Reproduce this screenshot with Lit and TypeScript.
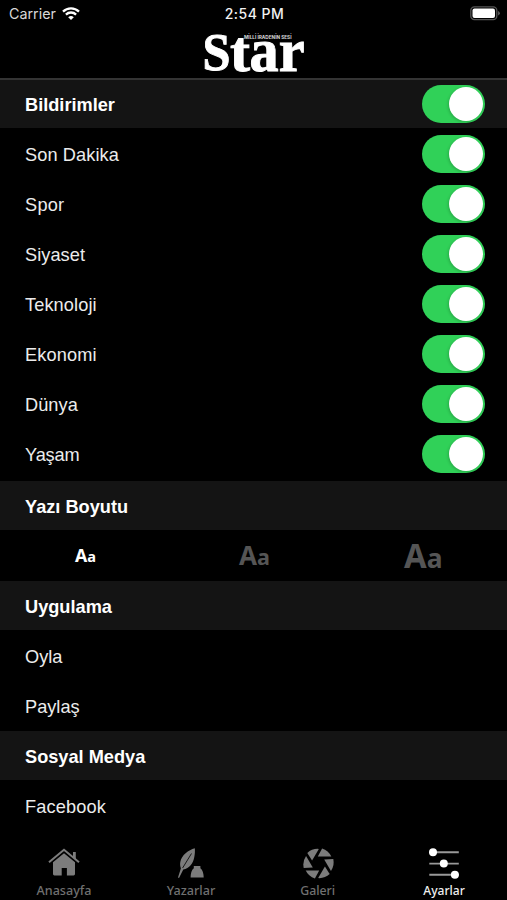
import { LitElement, html, svg, css } from "lit";
import { customElement, property } from "lit/decorators.js";
import { classMap } from "lit/directives/class-map.js";

@customElement("toggle-switch")
class ToggleSwitch extends LitElement {
  static styles = css`
    :host { display: block; flex: none; }
    .track {
      box-sizing: border-box; width: 63px; height: 38px; padding: 2px;
      border-radius: 19px; background: #30d158;
      display: flex; justify-content: flex-end;
    }
    .knob { width: 34px; height: 34px; border-radius: 50%; background: #fff; box-shadow: -1px 1px 3px rgba(0, 0, 0, 0.18); }
  `;
  render() {
    return html`<div class="track"><div class="knob"></div></div>`;
  }
}

@customElement("setting-row")
class SettingRow extends LitElement {
  @property() label = "";
  @property({ type: Boolean }) heading = false;
  @property({ type: Boolean }) toggle = false;
  @property({ type: Number }) fit = 0;
  static styles = css`
    :host { display: block; }
    .row {
      box-sizing: border-box; height: 50.5px; padding: 0 22px 0 25px;
      display: flex; align-items: center; justify-content: space-between;
      background: #000; color: #ececec;
      font: 400 18.2px/22px "Liberation Sans", Arial, sans-serif;
    }
    .row.toggle { height: 50px; }
    .heading { height: 49px; background: #141414; color: #fff; font-weight: 700; }
    .heading.toggle { height: 48px; }
    .label { white-space: nowrap; padding-top: 3px; }
    .toggle .label { padding-top: 2px; }
  `;
  render() {
    return html`<div class=${classMap({ row: true, heading: this.heading, toggle: this.toggle })}>
      <span class="label" style="letter-spacing:${this.fit}px">${this.label}</span>
      ${this.toggle ? html`<toggle-switch></toggle-switch>` : ""}
    </div>`;
  }
}

const homeIcon = svg`
  <path d="M1 14.2 16 1.8 31 14.2" fill="none" stroke="currentColor" stroke-width="2"/>
  <path d="M25 4h2.8v7.6L25 9.2z"/>
  <path d="M16 5.2 27 14.3V26a1.4 1.4 0 0 1-1.4 1.4H18.9V20h-5.2v7.4H6.4A1.4 1.4 0 0 1 5 26V14.3z"/>`;

const quillIcon = svg`
  <path d="M19.8.2C13.5 2 6.5 7 5.3 14c-.4 2.3-.2 4.4.6 6.2L3 29.6l1 .4 4.3-8.6c6-.6 10-6.4 11-12.4.6-3.3.8-6.2.5-8.8z"/>
  <path d="M16.500 5.500 7.600 20" stroke="#000" stroke-width=".8" fill="none"/>
  <path d="M18.800 18h6.600v2.200c2.200 1.600 3.300 5.600 3.300 9.300H15.600c0-3.700 1-7.700 3.200-9.300z"/>`;

const apertureIcon = svg`${[0, 60, 120, 180, 240, 300].map(
  (a) => svg`<path transform="translate(15.5 15.5) rotate(${a})" d="M3.600-15-.7-7H12.800A15.500 15.500 0 0 0 3.600-15z"/>`
)}`;

const slidersIcon = svg`
  <path d="M1.300 4.200h29.500M1.300 15.600h29.500M1.300 26.800h29.500" stroke="#999" stroke-width="1.900"/>
  <circle cx="5" cy="4.200" r="4"/><circle cx="15.800" cy="15.600" r="4"/><circle cx="26.900" cy="26.800" r="4"/>`;

const tabs = [
  { label: "Anasayfa", width: 55, icon: homeIcon, active: false, shift: 0 },
  { label: "Yazarlar", width: 48.5, icon: quillIcon, active: false, shift: 0 },
  { label: "Galeri", width: 35, icon: apertureIcon, active: false, shift: -1.3 },
  { label: "Ayarlar", width: 41.5, icon: slidersIcon, active: true, shift: 0 },
];

const sizes = [
  { big: 18, small: 14.8, x: 75, width: 21, baseline: 32.3, active: true },
  { big: 26.6, small: 22, x: 70, width: 31, baseline: 35, active: false },
  { big: 34, small: 27.5, x: 66, width: 38.5, baseline: 37.7, active: false },
];

const topics: [string, number][] = [
  ["Son Dakika", 0.1], ["Spor", 0.25], ["Siyaset", 0.05], ["Teknoloji", 0.1],
  ["Ekonomi", 0.15], ["Dünya", 0.05], ["Yaşam", -0.15],
];

@customElement("app-root")
class AppRoot extends LitElement {
  static styles = css`
    :host {
      display: flex; flex-direction: column; width: 507px; height: 900px;
      overflow: hidden; background: #000; color: #fff;
    }
    svg { display: block; }
    .status {
      height: 28px; flex: none; display: grid; grid-template-columns: 1fr auto 1fr;
      align-items: center; padding: 0 7px 0 9px;
      font: 400 14.3px/18px Inter, sans-serif;
    }
    .carrier { display: flex; align-items: center; gap: 6px; color: #d8d8d8; }
    .time { font-weight: 500; font-size: 14px; color: #f2f2f2; letter-spacing: 0.5px; }
    .battery { justify-self: end; }
    .brand {
      box-sizing: border-box; height: 52px; flex: none; display: flex; justify-content: center;
      border-bottom: 2px solid #343434;
    }
    .logo { font-family: "Liberation Serif", serif; font-weight: 700; fill: #fff; stroke: #fff; stroke-width: 0.9px; overflow: visible; }
    .motto { font: 700 4.8px Inter, sans-serif; fill: #d8d8d8; stroke: none; }
    .list { flex: 1; min-height: 0; overflow: hidden; }
    .topics { display: block; height: 353px; padding-top: 1px; box-sizing: border-box; }
    .sizes { display: flex; height: 51px; }
    .size { fill: #555; font: 700 18px "Noto Sans", sans-serif; width: 169px; }
    .size.active { fill: #fff; }
    .tabs { height: 60px; flex: none; display: flex; background: #000; }
    .tab {
      flex: 1; display: flex; flex-direction: column; align-items: center;
      padding-top: 8px; color: #7c7c7c; fill: currentColor;
    }
    .tab:not(.active) { padding-left: 1.5px; }
    .tab.active { color: #fff; }
    .name { font: 500 12px "Noto Sans", sans-serif; fill: #707070; }
    .active .name { fill: #eee; }
  `;

  render() {
    return html`
      <div class="status">
        <div class="carrier">
          <span>Carrier</span>
          <svg width="18" height="14" viewBox="0 0 18 14" fill="none" stroke="#fff" stroke-width="2.3">
            <path d="M1 4.600a11.500 11.500 0 0 1 16 0M3.900 7.600a7.300 7.300 0 0 1 10.200 0"/>
            <path d="M9 13.100 6.200 10.300a4 4 0 0 1 5.600 0z" fill="#fff" stroke="none"/>
          </svg>
        </div>
        <span class="time">2:54 PM</span>
        <svg class="battery" width="30" height="16" viewBox="0 0 30 16">
          <rect x=".8" y=".8" width="26" height="12.800" rx="3.600" fill="none" stroke="#555" stroke-width="1.300"/>
          <rect x="2.500" y="2.500" width="22.500" height="9.400" rx="2" fill="#fff"/>
          <path d="M28.200 5v4.500q1.600-.7 1.600-2.250T28.200 5z" fill="#666"/>
        </svg>
      </div>
      <div class="brand">
        <svg width="104" height="48" viewBox="202 28 104 48" class="logo">
          <text x="202.500" y="70.200" font-size="53" textLength="28" lengthAdjust="spacingAndGlyphs">S</text>
          <text x="230" y="70.500" font-size="56" textLength="20" lengthAdjust="spacingAndGlyphs">t</text>
          <text transform="translate(249.500 70.500) scale(1 1.080)" font-size="57" textLength="55" lengthAdjust="spacingAndGlyphs">ar</text>
          <text class="motto" x="244" y="39.400" textLength="47.500" lengthAdjust="spacingAndGlyphs">MİLLİ İRADENİN SESİ</text>
        </svg>
      </div>
      <div class="list">
        <setting-row heading toggle label="Bildirimler"></setting-row>
        <div class="topics">
          ${topics.map(([t, f]) => html`<setting-row toggle .label=${t} .fit=${f}></setting-row>`)}
        </div>
        <setting-row heading label="Yazı Boyutu"></setting-row>
        <div class="sizes">
          ${sizes.map((s) => html`<svg class=${classMap({ size: true, active: s.active })} width="169" height="51">
            <text x=${s.x} y=${s.baseline} textLength=${s.width} lengthAdjust="spacingAndGlyphs"><tspan font-size=${s.big}>A</tspan><tspan font-size=${s.small}>a</tspan></text>
          </svg>`)}
        </div>
        <setting-row heading label="Uygulama"></setting-row>
        <setting-row label="Oyla"></setting-row>
        <setting-row label="Paylaş"></setting-row>
        <setting-row heading label="Sosyal Medya"></setting-row>
        <setting-row label="Facebook" .fit=${0.15}></setting-row>
      </div>
      <div class="tabs">
        ${tabs.map((t) => html`<div class=${classMap({ tab: true, active: t.active })}>
          <svg width="32" height="32" viewBox="0 0 32 32">${t.icon}</svg>
          <svg width="70" height="19"><text class="name" x=${35 - t.width / 2 + t.shift} y="15" textLength=${t.width} lengthAdjust="spacingAndGlyphs">${t.label}</text></svg>
        </div>`)}
      </div>
    `;
  }
}
